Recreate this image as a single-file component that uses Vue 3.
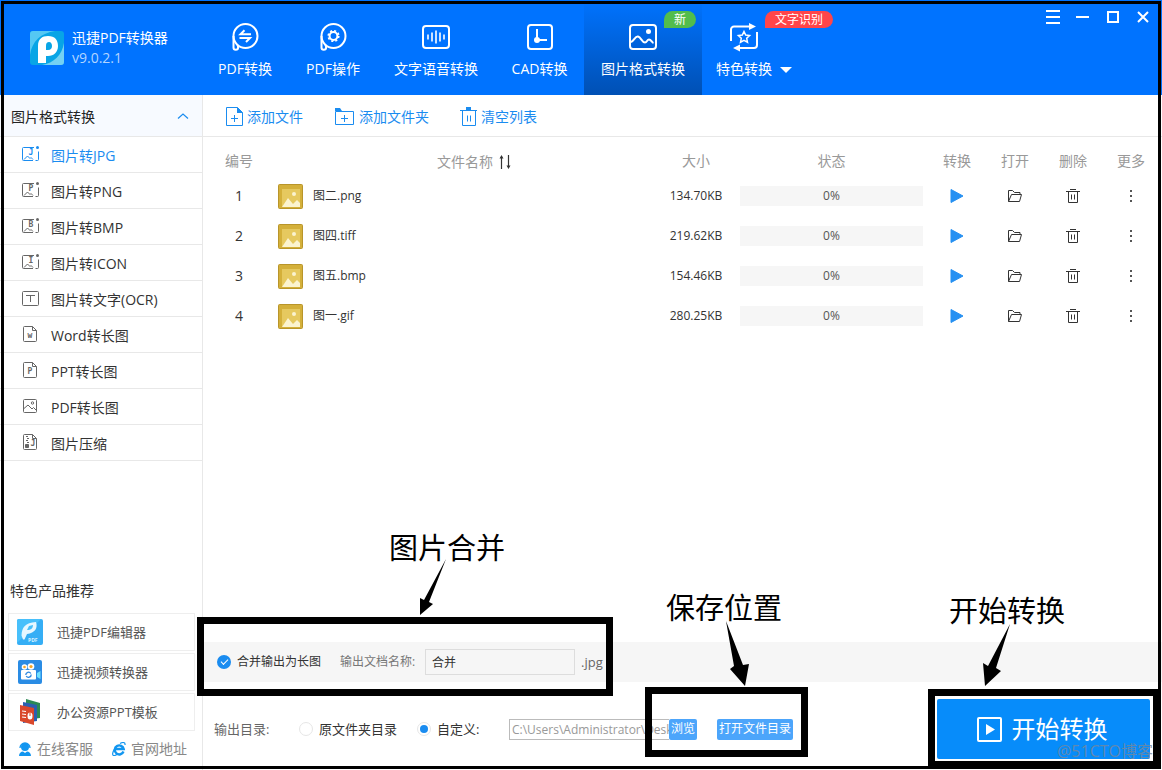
<script setup>
import { ref } from 'vue'

const tabs = [
  { label: 'PDF转换', icon: 'swap' },
  { label: 'PDF操作', icon: 'gear' },
  { label: '文字语音转换', icon: 'voice' },
  { label: 'CAD转换', icon: 'cad' },
  { label: '图片格式转换', icon: 'image', active: true, badge: '新', tone: 'green' },
  { label: '特色转换', icon: 'star', caret: true, badge: '文字识别', tone: 'red' }
]

const disc = '<circle cx="15.500" cy="14" r="12"/><path d="M3.500 14v11.500a2.300 2.300 0 0 0 4.600 0q0-1.500-.8-2.500"/>'
const tabIcons = {
  swap: disc + '<path d="M21 12.200H10.500l4-4M9.500 16h10.500l-4 4" stroke-width="2"/>',
  gear: disc + '<circle cx="15.500" cy="14" r="3.900" stroke-width="2"/><circle cx="15.500" cy="14" r="5.300" stroke-width="1.600" stroke-dasharray="2.100 2.060"/>',
  voice: '<rect x="2" y="4" width="26" height="22" rx="3"/><path d="M7 12.500v5M11 10.500v9M15 8.500v13M19 10.500v9M23 12.500v5" stroke-width="1.600"/>',
  cad: '<rect x="3" y="3" width="24" height="24" rx="3"/><path d="M12 7v12M12 18h10"/><circle cx="12" cy="18" r="3" fill="currentColor" stroke="none"/>',
  image: '<rect x="2" y="3" width="26" height="24" rx="3"/><circle cx="20.500" cy="9.500" r="2.500" fill="currentColor" stroke="none"/><path d="M3 20c3-1 4-6 7-5.500 3 .5 4 6 7 6 2 0 2-3 4-3s3 3 4.500 3.500"/>',
  star: '<path d="M2 19V7.500a3 3 0 0 1 3-3h17M28 10v13a3 3 0 0 1-3 3H9"/><path d="M20 1l7 3.500-7 3.500zM11 22.500L4 26l7 3.500z" fill="currentColor" stroke="none"/><path d="M15 9.500l1.700 3.600 3.900.5-2.900 2.700.8 3.900-3.500-1.900-3.500 1.900.8-3.900-2.900-2.700 3.900-.5z" stroke-width="1.500"/>'
}

const letterMark = (letter, x, y) =>
  `<text x="${x}" y="${y}" text-anchor="middle" font-family="DejaVu Sans Mono, monospace" font-size="8" font-weight="700" stroke="none" fill="currentColor">${letter}</text>`
const picture = (letter) =>
  '<path d="M12 2.500H1.500a1 1 0 0 0-1 1v11a1 1 0 0 0 1 1h9.500M13.500 15.500h2a1 1 0 0 0 1-1V6.500M2 14.500l3.500-3.500 2.500 2.500 1-1 2 2"/><circle cx="15.500" cy="2.500" r="1.500" fill="currentColor" stroke="none"/>' +
  letterMark(letter, 9, 10)
const sheet = (letter) =>
  '<path d="M2.500 1.500h8l4 4v10a1 1 0 0 1-1 1h-11a1 1 0 0 1-1-1v-13a1 1 0 0 1 1-1zM10.500 1.500v4h4"/>' + letterMark(letter, 8, 13)

const tools = [
  { label: '图片转JPG', icon: picture('J'), active: true },
  { label: '图片转PNG', icon: picture('P') },
  { label: '图片转BMP', icon: picture('B') },
  { label: '图片转ICON', icon: picture('I') },
  { label: '图片转文字(OCR)', icon: '<rect x=".5" y="2.500" width="16" height="14" rx="1"/><path d="M4 6.500h9M8.500 6.500v6.500"/>' },
  { label: 'Word转长图', icon: sheet('w') },
  { label: 'PPT转长图', icon: sheet('P') },
  { label: 'PDF转长图', icon: '<rect x="1.500" y="2.500" width="13" height="13" rx="1"/><path d="M2 11.500l4-3.500 4 4 1.500-1.500 3 3"/><circle cx="10.500" cy="6" r="1.200"/>' },
  { label: '图片压缩', icon: '<path d="M2.500 1.500h8l4 4v10a1 1 0 0 1-1 1h-11a1 1 0 0 1-1-1v-13a1 1 0 0 1 1-1zM10.500 1.500v4h4M4 3.500h2M5 5.500h2M4 7.500h2M5 9.500h2"/><path d="M3.500 11.500h3v3h-3z" fill="currentColor"/>' + letterMark('J', 11, 13) }
]

const files = [
  { name: '图二.png', size: '134.70KB' },
  { name: '图四.tiff', size: '219.62KB' },
  { name: '图五.bmp', size: '154.46KB' },
  { name: '图一.gif', size: '280.25KB' }
]

const merge = ref(true)
const docName = ref('合并')
const target = ref('custom')
const folder = ref('C:\\Users\\Administrator\\Desktop')
</script>

<template>
  <div class="app" lang="zh-CN">
    <header class="top">
      <div class="brand">
        <svg class="logo" viewBox="0 0 34 34">
          <rect width="34" height="34" rx="3" fill="#08a5e6" />
          <path d="M0 24V3a3 3 0 0 1 3-3h22C11 2 2 10 0 24z" fill="#55c8f3" />
          <path d="M34 12v19a3 3 0 0 1-3 3H12c12-2 20-10 22-22z" fill="#74d1f3" />
          <path fill-rule="evenodd" d="M8 32V15C8 8 12 5 18 5c7 0 10 4 10 10s-4 10-10 10h-2v7zM16 19h2c3 0 4-2 4-4s-1-4-3-4-3 1-3 4z" fill="#fff" />
        </svg>
        <div class="brand-text">
          <strong>迅捷PDF转换器</strong>
          <span>v9.0.2.1</span>
        </div>
      </div>
      <nav class="tabs">
        <button v-for="t in tabs" :key="t.label" type="button" class="tab" :class="{ active: t.active, more: t.caret }">
          <span class="stack">
            <svg class="tab-icon" viewBox="0 0 30 30" v-html="tabIcons[t.icon]"></svg>
            <span>{{ t.label }}</span>
          </span>
          <svg v-if="t.caret" class="caret" viewBox="0 0 12 6"><path d="M0 0h12L6 6z" fill="#fff" /></svg>
          <span v-if="t.badge" class="badge" :class="t.tone">{{ t.badge }}</span>
        </button>
      </nav>
      <div class="controls">
        <button type="button" aria-label="菜单"><svg viewBox="0 0 14 14"><path d="M0 1h14M0 7h14M0 13h14" /></svg></button>
        <button type="button" aria-label="最小化"><svg viewBox="0 0 14 14"><path d="M0 7h13" /></svg></button>
        <button type="button" aria-label="最大化"><svg viewBox="0 0 14 14"><path d="M2 2h10v10H2z" /></svg></button>
        <button type="button" aria-label="关闭"><svg viewBox="0 0 14 14"><path d="M2 2l10 10M12 2L2 12" /></svg></button>
      </div>
    </header>

    <div class="body">
      <aside class="side">
        <button type="button" class="side-head">
          <span>图片格式转换</span>
          <svg viewBox="0 0 12 8"><path d="M1 5.500l5-4.500 5 4.500" fill="none" stroke="#1a8cf0" stroke-width="1.200" /></svg>
        </button>
        <ul class="tools">
          <li v-for="t in tools" :key="t.label">
            <button type="button" :class="{ active: t.active }">
              <svg viewBox="0 0 18 18" v-html="t.icon"></svg>
              <span>{{ t.label }}</span>
            </button>
          </li>
        </ul>
        <section class="promo">
          <h2>特色产品推荐</h2>
          <a href="#" class="card">
            <svg viewBox="0 0 26 26">
              <rect width="26" height="26" rx="2" fill="#35aef5" />
              <path d="M0 2a2 2 0 0 1 2-2h22L0 24z" fill="#48c0fb" />
              <path fill-rule="evenodd" d="M6 20.500l-1.500-4C5 8 8 4 19 3c2 6-1 11-9 12l-2.500 5.500zM10 11l2-4 4-1c0 3-2 5-6 5z" fill="#e6f7ff" />
              <text x="11" y="23" font-size="5" font-weight="700" fill="#d8f1ff">PDF</text>
            </svg>
            <span>迅捷PDF编辑器</span>
          </a>
          <a href="#" class="card">
            <svg viewBox="0 0 26 26">
              <rect x="1" y="1" width="24" height="24" rx="2" fill="#2a8ce4" />
              <circle cx="7.500" cy="8" r="2.800" fill="#fff" /><circle cx="14" cy="7.500" r="3.300" fill="#fff" />
              <circle cx="7.500" cy="8" r="1.300" fill="#f5a623" /><circle cx="14" cy="7.500" r="1.600" fill="#f5a623" />
              <rect x="4" y="11" width="15" height="9.500" rx="1" fill="#fff" />
              <path d="M20 14l3.500-2v8L20 18z" fill="#6fe0ff" />
              <path d="M8.800 16a2.700 2.700 0 0 1 5-1.500M14.200 15.500a2.700 2.700 0 0 1-5 1.500" fill="none" stroke="#2a86df" stroke-width="1.300" />
            </svg>
            <span>迅捷视频转换器</span>
          </a>
          <a href="#" class="card">
            <svg viewBox="0 0 26 26">
              <path d="M9 0l14 4v15l-14 2z" fill="#2c8a55" />
              <path d="M6 3l14 3v16l-14 2z" fill="#2c5fb0" />
              <path d="M3 6l14 3v17L3 22z" fill="#d9472b" />
              <path d="M5 12l4 .5M5 15l4 .5M5 18l4 .5" stroke="#fff" stroke-width="1.200" />
              <ellipse cx="13" cy="17" rx="2.500" ry="3.500" fill="#fff" />
              <path d="M13 17v-4" stroke="#d9472b" />
            </svg>
            <span>办公资源PPT模板</span>
          </a>
          <div class="links">
            <a href="#">
              <svg viewBox="0 0 14 14">
                <circle cx="7" cy="5" r="4" fill="#1296f0" /><path d="M2 6a5 5 0 0 1 10 0" fill="none" stroke="#1296f0" stroke-width="1.300" />
                <path d="M1 14c0-3 2-4.500 4-4.500l2 1.500 2-1.500c2 0 4 1.500 4 4.500z" fill="#1296f0" />
              </svg>
              <span>在线客服</span>
            </a>
            <a href="#">
              <svg viewBox="0 0 14 14">
                <path d="M11.500 9.500A4.500 4.500 0 1 1 11.700 7H4" fill="none" stroke="#1296f0" stroke-width="2.400" />
                <path d="M8 1.500c3-1.500 5.500-1.500 5 1.500M3 6c-2.500 4-3.500 8-.5 7.500 1 0 2-.7 3-1.500" fill="none" stroke="#1296f0" stroke-width="1.200" />
              </svg>
              <span>官网地址</span>
            </a>
          </div>
        </section>
      </aside>

      <main class="main">
        <div class="toolbar">
          <button type="button">
            <svg viewBox="0 0 18 20"><path d="M.5.500h11l5 5v13H.5z" /><path d="M11 0l6 6h-6z" fill="currentColor" stroke="none" /><path d="M5 11.500h7M8.500 8v7" /></svg>
            <span>添加文件</span>
          </button>
          <button type="button">
            <svg class="wide" viewBox="0 0 20 20"><path d="M1.500 4.500h18v13h-18z" /><path d="M1 1h5l2 3H1z" fill="currentColor" stroke="none" /><path d="M7 11.500h7M10.500 8v7" /></svg>
            <span>添加文件夹</span>
          </button>
          <button type="button">
            <svg viewBox="0 0 18 20"><path d="M0 3.500h17M2.500 3.500v15h13v-15M7.500 8.500v6M10.500 8.500v6" /><path d="M6 0h5v3H6z" fill="currentColor" stroke="none" /></svg>
            <span>清空列表</span>
          </button>
        </div>

        <div class="list">
          <table>
            <colgroup>
              <col class="c-no" /><col /><col class="c-size" /><col class="c-state" />
              <col class="c-act" /><col class="c-act" /><col class="c-act" /><col class="c-act" />
            </colgroup>
            <thead>
              <tr>
                <th>编号</th>
                <th class="name-head">
                  <span>文件名称</span>
                  <svg viewBox="0 0 12 14"><path d="M2.500 14V2M9.500 0v12" stroke="#333" stroke-width="1.200" /><path d="M.5 3.500l2-3.500 2 3.500zM7.500 10.500l2 3.500 2-3.500z" fill="#333" /></svg>
                </th>
                <th>大小</th><th>状态</th><th>转换</th><th>打开</th><th>删除</th><th>更多</th>
              </tr>
            </thead>
            <tbody>
              <tr v-for="(f, i) in files" :key="f.name">
                <td class="no">{{ i + 1 }}</td>
                <td>
                  <div class="file">
                    <svg viewBox="0 0 25 25">
                      <rect x=".5" y=".5" width="24" height="24" rx="1" fill="#d4b03a" stroke="#b9952a" />
                      <rect x="4" y="5" width="18" height="18" fill="#e6c95f" />
                      <circle cx="16" cy="10" r="2" fill="#fbf3cf" />
                      <path d="M4 23l6-9 5 6 4-4 3 3v4z" fill="#fbf3cf" />
                    </svg>
                    <span>{{ f.name }}</span>
                  </div>
                </td>
                <td>{{ f.size }}</td>
                <td class="state"><div class="bar">0%</div></td>
                <td><button type="button" aria-label="转换"><svg viewBox="0 0 16 16"><path d="M2 1.500l12 6.500-12 6.500z" fill="#2590f2" stroke="#2590f2" stroke-linejoin="round" /></svg></button></td>
                <td><button type="button" aria-label="打开"><svg viewBox="0 0 16 16"><path d="M1.500 13.500v-11h4l2 2h5.500v2M1.500 13.500l3-7h10l-2 7z" /></svg></button></td>
                <td><button type="button" aria-label="删除"><svg viewBox="0 0 16 16"><path d="M1 3.500h14M5 1.500h6M3.500 3.500v11h9v-11M6.500 6.500v5M9.500 6.500v5" /></svg></button></td>
                <td><button type="button" aria-label="更多"><svg viewBox="0 0 16 16"><path d="M7 2h2v2H7zM7 7h2v2H7zM7 12h2v2H7z" fill="#555" stroke="none" /></svg></button></td>
              </tr>
            </tbody>
          </table>
        </div>

        <div class="merge">
          <label class="choice"><input v-model="merge" type="checkbox" class="tick" /><span>合并输出为长图</span></label>
          <label class="doc" for="doc-name">输出文档名称:</label>
          <input id="doc-name" v-model="docName" type="text" class="doc-name" />
          <span class="ext">.jpg</span>
        </div>

        <div class="output">
          <span class="out-label">输出目录:</span>
          <label class="choice first"><input v-model="target" type="radio" name="target" value="source" /><span>原文件夹目录</span></label>
          <label class="choice second"><input v-model="target" type="radio" name="target" value="custom" /><span>自定义:</span></label>
          <input v-model="folder" type="text" class="path" aria-label="自定义目录" />
          <button type="button" class="small">浏览</button>
          <button type="button" class="small open">打开文件目录</button>
          <button type="button" class="start">
            <svg viewBox="0 0 25 25"><rect x="1" y="1" width="23" height="23" rx="1" fill="none" stroke="#fff" stroke-width="2" /><path d="M9 7l9 5.500L9 18z" fill="#fff" /></svg>
            <span>开始转换</span>
          </button>
        </div>
      </main>
    </div>

    <div class="frame"></div>
    <div class="mark mark-merge"></div>
    <div class="mark mark-save"></div>
    <div class="mark mark-start"></div>
    <div class="note note-merge">
      <span>图片合并</span>
      <svg viewBox="0 0 40 60"><path d="M27 3L5 44l-4-2v17l13-11-4-2z" /></svg>
    </div>
    <div class="note note-save">
      <span>保存位置</span>
      <svg viewBox="0 0 40 70"><path d="M1 1l8 45-4 3 15 17 4-22-6 1z" /></svg>
    </div>
    <div class="note note-start">
      <span>开始转换</span>
      <svg viewBox="0 0 40 70"><path d="M31 1L9 43l-5-3 2 23 16-15-5-3z" /></svg>
    </div>
    <div class="watermark">@51CTO博客</div>
  </div>
</template>

<style>
body {
  margin: 0;
}
</style>

<style scoped>
.app {
  position: relative;
  display: flex;
  flex-direction: column;
  min-height: 100vh;
  overflow: hidden;
  background: #fff;
  color: #333;
  font: 14px/20px "Open Sans", "Noto Sans CJK SC", sans-serif;
}
.app * {
  box-sizing: border-box;
}
button,
input {
  margin: 0;
  padding: 0;
  border: 0;
  background: none;
  color: inherit;
  font: inherit;
}
a {
  color: inherit;
  text-decoration: none;
}
svg {
  display: block;
  flex: none;
}

.top {
  display: flex;
  height: 95px;
  background: #0073ff;
  color: #fff;
}
.brand {
  display: flex;
  gap: 8px;
  width: 201px;
  padding: 28px 0 0 30px;
}
.logo {
  width: 34px;
  height: 34px;
  margin-top: 3px;
}
.brand-text strong,
.brand-text span {
  display: block;
  font-weight: 400;
}
.brand-text span {
  color: #b3d5ff;
}
.tabs {
  display: grid;
  grid-template-columns: 88px 88px 118px 89px 118px auto;
}
.tab {
  position: relative;
  display: flex;
  justify-content: center;
  padding-top: 22px;
  white-space: nowrap;
}
.tab.active {
  background: linear-gradient(#0073ff, #0050b4);
}
.tab.more {
  padding-left: 14px;
  gap: 8px;
}
.stack {
  display: flex;
  flex-direction: column;
  align-items: center;
  gap: 7px;
}
.tab-icon {
  width: 30px;
  height: 30px;
  fill: none;
  stroke: currentColor;
  stroke-width: 2;
}
.caret {
  width: 12px;
  height: 6px;
  margin-top: 45px;
}
.badge {
  position: absolute;
  top: 11px;
  left: 80px;
  height: 17px;
  padding: 0 10px;
  border-radius: 9px 9px 9px 0;
  font-size: 12px;
  line-height: 17px;
}
.badge.green {
  background: #52bd4c;
}
.badge.red {
  left: 63px;
  background: #ff4549;
}
.controls {
  display: flex;
  align-items: flex-start;
  margin-left: auto;
  padding-right: 4px;
}
.controls button {
  display: grid;
  place-items: center;
  width: 30px;
  height: 34px;
}
.controls svg {
  width: 14px;
  height: 14px;
  fill: none;
  stroke: #fff;
  stroke-width: 2;
}

.body {
  display: flex;
  flex: 1;
}
.side {
  display: flex;
  flex-direction: column;
  width: 203px;
  border-right: 1px solid #e8e8e8;
}
.side-head {
  display: flex;
  align-items: center;
  justify-content: space-between;
  height: 42px;
  padding: 2px 13px 0 11px;
  border-bottom: 1px solid #e8e8e8;
  background: #f7faff;
  color: #222;
}
.side-head svg {
  width: 12px;
  height: 8px;
}
.tools {
  margin: 0;
  padding: 0;
  list-style: none;
}
.tools button {
  display: flex;
  align-items: center;
  gap: 11px;
  width: 100%;
  height: 36px;
  padding: 2px 0 0 22px;
  border-bottom: 1px solid #e8e8e8;
}
.tools svg {
  width: 18px;
  height: 18px;
  margin-top: -4px;
  color: #666;
  fill: none;
  stroke: currentColor;
}
.tools button.active,
.tools .active svg {
  color: #1a8cf0;
}
.promo {
  margin-top: auto;
  padding: 0 7px 11px 8px;
}
.promo h2 {
  margin: 0 0 12px 2px;
  font-size: 14px;
  font-weight: 400;
}
.card {
  display: flex;
  align-items: center;
  gap: 14px;
  height: 38px;
  margin-bottom: 2px;
  padding-left: 8px;
  border: 1px solid #eee;
  color: #555;
  font-size: 13px;
}
.card svg {
  width: 26px;
  height: 26px;
}
.links {
  display: flex;
  gap: 19px;
  padding: 6px 0 0 10px;
  color: #888;
}
.links a {
  display: flex;
  align-items: center;
  gap: 5px;
}
.links svg {
  width: 14px;
  height: 14px;
}

.main {
  display: flex;
  flex: 1;
  flex-direction: column;
  min-width: 0;
}
.toolbar {
  display: flex;
  gap: 31px;
  height: 42px;
  padding: 2px 0 0 23px;
  border-bottom: 1px solid #e8e8e8;
  color: #1a8cf0;
}
.toolbar button {
  display: flex;
  align-items: center;
  gap: 3px;
}
.toolbar svg {
  width: 18px;
  height: 20px;
  fill: none;
  stroke: currentColor;
}
.toolbar .wide {
  width: 20px;
  margin-right: 2px;
}
.list {
  flex: 1;
  padding: 9px 2px 0 0;
}
table {
  width: 100%;
  table-layout: fixed;
  border-collapse: collapse;
  font-size: 12px;
  text-align: center;
}
.c-no {
  width: 72px;
}
.c-size {
  width: 78px;
}
.c-state {
  width: 193px;
}
.c-act {
  width: 58px;
}
th {
  height: 30px;
  padding: 0;
  color: #999;
  font-size: 14px;
  font-weight: 400;
}
.name-head {
  padding-left: 16px;
}
.name-head span,
.name-head svg {
  display: inline-block;
  vertical-align: middle;
}
.name-head svg {
  width: 12px;
  height: 14px;
  margin-left: 6px;
}
td {
  height: 40px;
  padding: 0;
}
.no {
  font-size: 14px;
}
.file {
  display: flex;
  align-items: center;
  gap: 10px;
  padding-left: 3px;
}
.file svg {
  width: 25px;
  height: 25px;
}
.state {
  padding: 0 5px;
}
.bar {
  background: #f6f6f6;
  color: #555;
}
td button {
  display: block;
  margin: 0 auto;
}
td button svg {
  width: 16px;
  height: 16px;
  fill: none;
  stroke: #333;
}

.merge {
  display: flex;
  align-items: center;
  height: 40px;
  padding-left: 14px;
  background: #f6f6f6;
  font-size: 12px;
}
.choice {
  display: flex;
  align-items: center;
  gap: 6px;
  white-space: nowrap;
}
.tick {
  display: grid;
  place-items: center;
  width: 14px;
  height: 14px;
  border-radius: 50%;
  background: #ddd;
  appearance: none;
}
.tick:checked {
  background: #1a8cf0;
}
.tick:checked::after {
  width: 6px;
  height: 3px;
  margin-bottom: 2px;
  border: solid #fff;
  border-width: 0 0 1px 1px;
  content: "";
  transform: rotate(-45deg);
}
.doc {
  width: 85px;
  margin-left: 19px;
  color: #777;
}
.doc-name {
  width: 150px;
  height: 26px;
  padding: 0 6px;
  border: 1px solid #ddd;
}
.ext {
  margin-left: 6px;
  color: #666;
  font-size: 13px;
}
.output {
  display: flex;
  align-items: center;
  padding: 17px 12px 11px 11px;
  font-size: 13px;
  white-space: nowrap;
}
.out-label {
  width: 85px;
  color: #666;
}
.choice.first {
  width: 118px;
}
.choice.second {
  width: 92px;
}
.choice input[type="radio"] {
  display: grid;
  place-items: center;
  width: 14px;
  height: 14px;
  border: 1px solid #e6e6e6;
  border-radius: 50%;
  appearance: none;
}
.choice input[type="radio"]:checked::after {
  width: 8px;
  height: 8px;
  border-radius: 50%;
  background: #1a8cf0;
  content: "";
}
.path {
  width: 160px;
  height: 21px;
  padding-left: 2px;
  border: 1px solid #bbb;
  border-right: 0;
  color: #999;
  font-size: 12px;
}
.small {
  height: 21px;
  padding: 0 2px;
  border-radius: 2px;
  background: #4ca5fb;
  color: #fff;
  font-size: 12px;
}
.open {
  margin-left: 20px;
}
.start {
  display: flex;
  align-items: center;
  justify-content: center;
  gap: 10px;
  width: 213px;
  height: 60px;
  margin-left: auto;
  padding-right: 3px;
  border-radius: 2px;
  background: #078cfa;
  color: #fff;
  font-size: 24px;
}
.start svg {
  width: 25px;
  height: 25px;
}

.frame,
.mark,
.note,
.watermark {
  position: absolute;
  pointer-events: none;
}
.frame {
  inset: 1px;
  border: 3px solid #000;
}
.mark {
  border: 7px solid #000;
}
.mark-merge {
  bottom: 74px;
  left: 197px;
  width: 416px;
  height: 79px;
}
.mark-save {
  bottom: 13px;
  left: 645px;
  width: 163px;
  height: 70px;
}
.mark-start {
  right: 2px;
  bottom: 2px;
  width: 232px;
  height: 79px;
}
.note {
  color: #000;
  font-size: 29px;
  line-height: 32px;
}
.note svg {
  fill: #000;
}
.note-merge {
  bottom: 154px;
  left: 389px;
}
.note-merge svg {
  width: 40px;
  height: 60px;
  margin: -8px 0 0 30px;
}
.note-save {
  bottom: 80px;
  left: 666px;
}
.note-save svg {
  width: 40px;
  height: 70px;
  margin: -4px 0 0 59px;
}
.note-start {
  right: 97px;
  bottom: 77px;
}
.note-start svg {
  width: 40px;
  height: 70px;
  margin: -4px 0 0 30px;
}
.watermark {
  right: 9px;
  bottom: 9px;
  color: rgba(120, 135, 155, 0.8);
  font-size: 16px;
}
</style>
